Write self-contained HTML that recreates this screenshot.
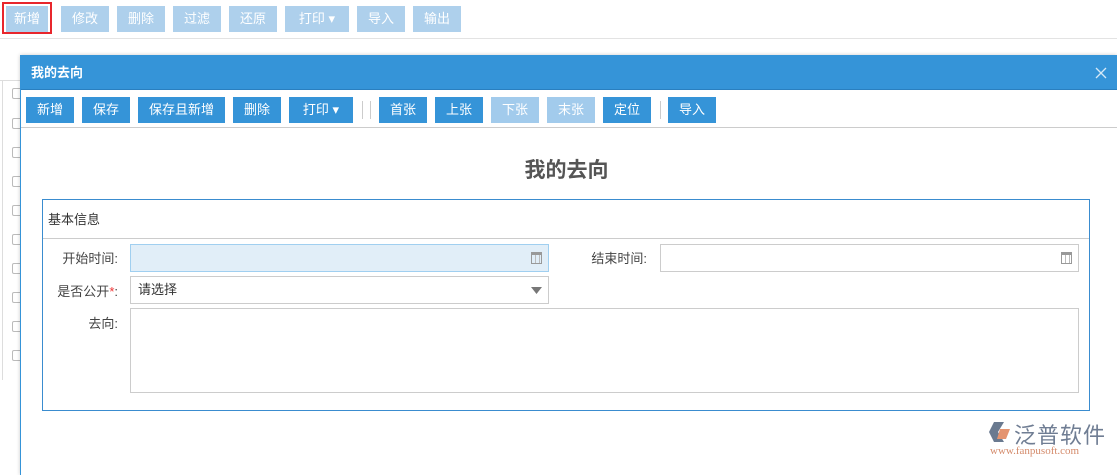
<!DOCTYPE html>
<html><head><meta charset="utf-8"><style>
*{box-sizing:border-box;margin:0;padding:0}
body{width:1117px;height:466px;overflow:hidden;background:#fff;font-family:"Liberation Sans","Noto Sans CJK SC",sans-serif;font-size:13px;position:relative}
.b{position:absolute;height:26px;line-height:26px;text-align:center;color:#fff;font-size:13px}
.l{background:#aed0ec}
.d{background:#3594d8}
.dl{background:#a2cbec}
.sep{position:absolute;width:1px;height:18px;background:#ccc}
.cb{position:absolute;left:12px;width:11px;height:11px;border:1px solid #bbb;border-radius:2px;background:#fff}
.lab{position:absolute;color:#444;font-size:13px;text-align:right}
.in{position:absolute;border:1px solid #ccc;background:#fff}
</style></head><body>
<div style="position:absolute;left:2px;top:2px;width:50px;height:32px;border:2px solid #e8262c"></div>
<div class="b l" style="left:6px;top:6px;width:42px">新增</div>
<div class="b l" style="left:61px;top:6px;width:48px">修改</div>
<div class="b l" style="left:117px;top:6px;width:48px">删除</div>
<div class="b l" style="left:173px;top:6px;width:48px">过滤</div>
<div class="b l" style="left:229px;top:6px;width:48px">还原</div>
<div class="b l" style="left:285px;top:6px;width:64px">打印 ▾</div>
<div class="b l" style="left:357px;top:6px;width:48px">导入</div>
<div class="b l" style="left:413px;top:6px;width:48px">输出</div>
<div style="position:absolute;left:0;top:38px;width:1117px;height:1px;background:#e3e3e3"></div>
<div style="position:absolute;left:0;top:80px;width:20px;height:1px;background:#ddd"></div>
<div style="position:absolute;left:2px;top:80px;width:1px;height:300px;background:#ddd"></div>
<div class="cb" style="top:88px"></div><div class="cb" style="top:118px"></div><div class="cb" style="top:147px"></div><div class="cb" style="top:176px"></div><div class="cb" style="top:205px"></div><div class="cb" style="top:234px"></div><div class="cb" style="top:263px"></div><div class="cb" style="top:292px"></div><div class="cb" style="top:321px"></div><div class="cb" style="top:350px"></div>
<div style="position:absolute;left:20px;top:55px;width:1097px;height:420px;background:#fff;border-left:1px solid #3594d8;box-shadow:0 0 4px rgba(0,0,0,.2)">
<div style="height:35px;background:#3594d8;color:#fff;font-weight:bold;font-size:13px;line-height:35px;padding-left:10px;border-bottom:1px solid #2a7fbf">我的去向<svg style="position:absolute;right:10px;top:12px" width="12" height="12" viewBox="0 0 12 12"><path d="M1 1L11 11M11 1L1 11" stroke="#d6e9f7" stroke-width="1.3"/></svg></div>
<div style="position:absolute;left:0;top:72px;width:1097px;height:1px;background:#ccc"></div>
</div>
<div class="b d" style="left:26px;top:97px;width:48px">新增</div>
<div class="b d" style="left:82px;top:97px;width:48px">保存</div>
<div class="b d" style="left:138px;top:97px;width:87px">保存且新增</div>
<div class="b d" style="left:233px;top:97px;width:48px">删除</div>
<div class="b d" style="left:289px;top:97px;width:64px">打印 ▾</div>
<div class="sep" style="left:362px;top:101px"></div><div class="sep" style="left:370px;top:101px"></div>
<div class="b d" style="left:379px;top:97px;width:48px">首张</div>
<div class="b d" style="left:435px;top:97px;width:48px">上张</div>
<div class="b dl" style="left:491px;top:97px;width:48px">下张</div>
<div class="b dl" style="left:547px;top:97px;width:48px">末张</div>
<div class="b d" style="left:603px;top:97px;width:48px">定位</div>
<div class="sep" style="left:660px;top:101px"></div>
<div class="b d" style="left:668px;top:97px;width:48px">导入</div>
<div style="position:absolute;left:20px;top:154px;width:1097px;text-align:center;font-size:21px;font-weight:bold;color:#555;padding-right:4px">我的去向</div>
<div style="position:absolute;left:42px;top:199px;width:1048px;height:212px;border:1px solid #3a8ccf"></div>
<div style="position:absolute;left:48px;top:209px;color:#333">基本信息</div>
<div style="position:absolute;left:43px;top:238px;width:1046px;height:1px;background:#ccc"></div>
<div class="lab" style="left:38px;top:248px;width:80px">开始时间:</div>
<div class="in" style="left:130px;top:244px;width:419px;height:28px;background:#e1eef8;border-color:#a0cff0"></div>
<div style="position:absolute;left:531px;top:252px;width:11px;height:12px;border:1px solid #999;border-top-width:3px;background:repeating-linear-gradient(90deg,transparent 0 3px,#bbb 3px 4px)"></div>
<div class="lab" style="left:567px;top:248px;width:80px">结束时间:</div>
<div class="in" style="left:660px;top:244px;width:419px;height:28px"></div>
<div style="position:absolute;left:1061px;top:252px;width:11px;height:12px;border:1px solid #999;border-top-width:3px;background:repeating-linear-gradient(90deg,transparent 0 3px,#bbb 3px 4px)"></div>
<div class="lab" style="left:38px;top:281px;width:80px">是否公开<span style="color:#e33">*</span>:</div>
<div class="in" style="left:130px;top:276px;width:419px;height:28px;color:#333;line-height:26px;padding-left:7px">请选择<svg style="position:absolute;right:6px;top:10px" width="11" height="7" viewBox="0 0 11 7"><path d="M0 0H11L5.5 7Z" fill="#777"/></svg></div>
<div class="lab" style="left:38px;top:313px;width:80px">去向:</div>
<div class="in" style="left:130px;top:308px;width:949px;height:85px"></div>
<div style="position:absolute;left:988px;top:421px;width:24px;height:22px;">
<svg width="24" height="22" viewBox="0 0 24 22"><path d="M6 1 L16 1 L10 11 L16 21 L6 21 L1 11Z" fill="#6a7a90"/><path d="M12 8 L22 8 L18 18 L9 18Z" fill="#e49470"/></svg></div>
<div style="position:absolute;left:1014px;top:418px;font-size:22px;color:#6f7d93;letter-spacing:1px">泛普软件</div>
<div style="position:absolute;left:990px;top:445px;font-size:11px;color:#d48a6a;font-family:'Liberation Serif',serif">www.fanpusoft.com</div>
</body></html>
